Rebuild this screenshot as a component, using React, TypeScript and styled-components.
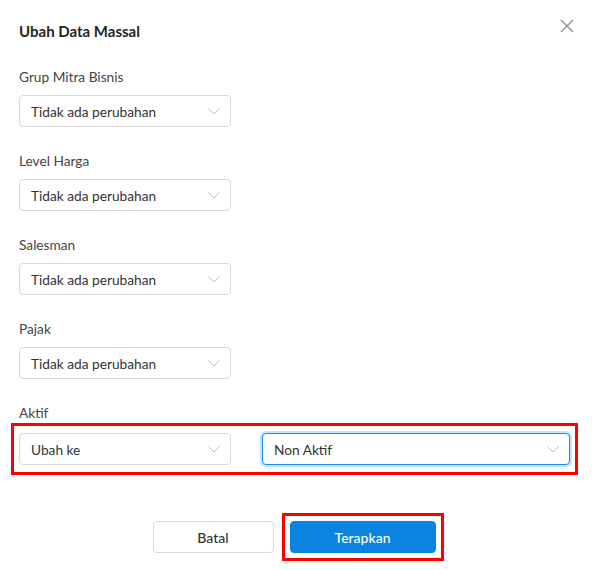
import styled, { createGlobalStyle } from 'styled-components';

const GlobalStyle = createGlobalStyle`
  html, body {
    margin: 0;
    padding: 0;
    background: #ffffff;
  }
  body {
    font-family: Lato, "Noto Sans", "Liberation Sans", sans-serif;
    color: #333333;
  }
`;

const Modal = styled.div`
  width: 592px;
  box-sizing: border-box;
  padding: 20px 19px 0 19px;
`;

const Header = styled.div`
  display: flex;
  justify-content: space-between;
  align-items: center;
  height: 22px;
`;

const Title = styled.h2`
  margin: 0;
  font-size: 15px;
  font-weight: 700;
  color: #262626;
  line-height: 22px;
`;

const CloseButton = styled.button`
  display: flex;
  align-items: center;
  justify-content: center;
  width: 16px;
  height: 16px;
  padding: 0;
  margin-top: -10px;
  margin-right: -2px;
  border: none;
  background: none;
  cursor: pointer;
`;

const Form = styled.div`
  display: flex;
  flex-direction: column;
  gap: 24px;
  margin-top: 25px;
`;

const Field = styled.div<{ $tight?: boolean }>`
  display: flex;
  flex-direction: column;
  gap: ${(p) => (p.$tight ? '0' : '8px')};
`;

const Label = styled.label`
  font-size: 13.7px;
  line-height: 20px;
  color: #444444;
`;

const Select = styled.div<{ $focused?: boolean; $grow?: boolean }>`
  display: flex;
  align-items: center;
  justify-content: space-between;
  box-sizing: border-box;
  height: 32px;
  width: ${(p) => (p.$grow ? 'auto' : '212px')};
  flex: ${(p) => (p.$grow ? '1' : 'none')};
  padding: 0 10px 0 11px;
  border: 1px solid ${(p) => (p.$focused ? '#1a8cf0' : '#d9d9d9')};
  border-radius: 4px;
  box-shadow: ${(p) => (p.$focused ? '0 0 0 2px rgba(24, 144, 255, 0.25)' : 'none')};
  background: #ffffff;
  font-size: 13.7px;
  color: #333333;
  cursor: pointer;
`;

const Highlight = styled.div`
  border: 3px solid #ff0000;
  margin: 0 -5px 0 -8px;
  padding: 7px 5px;
`;

const Row = styled.div`
  display: flex;
  gap: 31px;
`;

const Footer = styled.div`
  display: flex;
  justify-content: center;
  align-items: center;
  gap: 8px;
  margin-top: 38px;
  padding-left: 4px;
`;

const ButtonFrame = styled.div`
  border: 3px solid #ff0000;
  padding: 5px;
`;

const Button = styled.button<{ $primary?: boolean }>`
  height: 32px;
  width: ${(p) => (p.$primary ? '146px' : '121px')};
  border-radius: 4px;
  border: 1px solid ${(p) => (p.$primary ? '#0a84e0' : '#d9d9d9')};
  background: ${(p) => (p.$primary ? '#0a84e0' : '#ffffff')};
  color: ${(p) => (p.$primary ? '#ffffff' : '#333333')};
  font-family: inherit;
  font-size: 14px;
  font-weight: 500;
  cursor: pointer;
`;

function Chevron() {
  return (
    <svg width="12" height="7" viewBox="0 0 12 7" fill="none">
      <path d="M0.5 0.5L6 6L11.5 0.5" stroke="#bfbfbf" strokeWidth="1" />
    </svg>
  );
}

function CloseIcon() {
  return (
    <svg width="14" height="14" viewBox="0 0 14 14" fill="none">
      <path d="M1 1L13 13M13 1L1 13" stroke="#8c8c8c" strokeWidth="1.3" />
    </svg>
  );
}

const fields = ['Grup Mitra Bisnis', 'Level Harga', 'Salesman', 'Pajak'];

export default function App() {
  return (
    <>
      <GlobalStyle />
      <Modal>
        <Header>
          <Title>Ubah Data Massal</Title>
          <CloseButton aria-label="Tutup">
            <CloseIcon />
          </CloseButton>
        </Header>
        <Form>
          {fields.map((label) => (
            <Field key={label}>
              <Label>{label}</Label>
              <Select>
                <span>Tidak ada perubahan</span>
                <Chevron />
              </Select>
            </Field>
          ))}
          <Field $tight>
            <Label>Aktif</Label>
            <Highlight>
              <Row>
                <Select>
                  <span>Ubah ke</span>
                  <Chevron />
                </Select>
                <Select $grow $focused>
                  <span>Non Aktif</span>
                  <Chevron />
                </Select>
              </Row>
            </Highlight>
          </Field>
        </Form>
        <Footer>
          <Button>Batal</Button>
          <ButtonFrame>
            <Button $primary>Terapkan</Button>
          </ButtonFrame>
        </Footer>
      </Modal>
    </>
  );
}
